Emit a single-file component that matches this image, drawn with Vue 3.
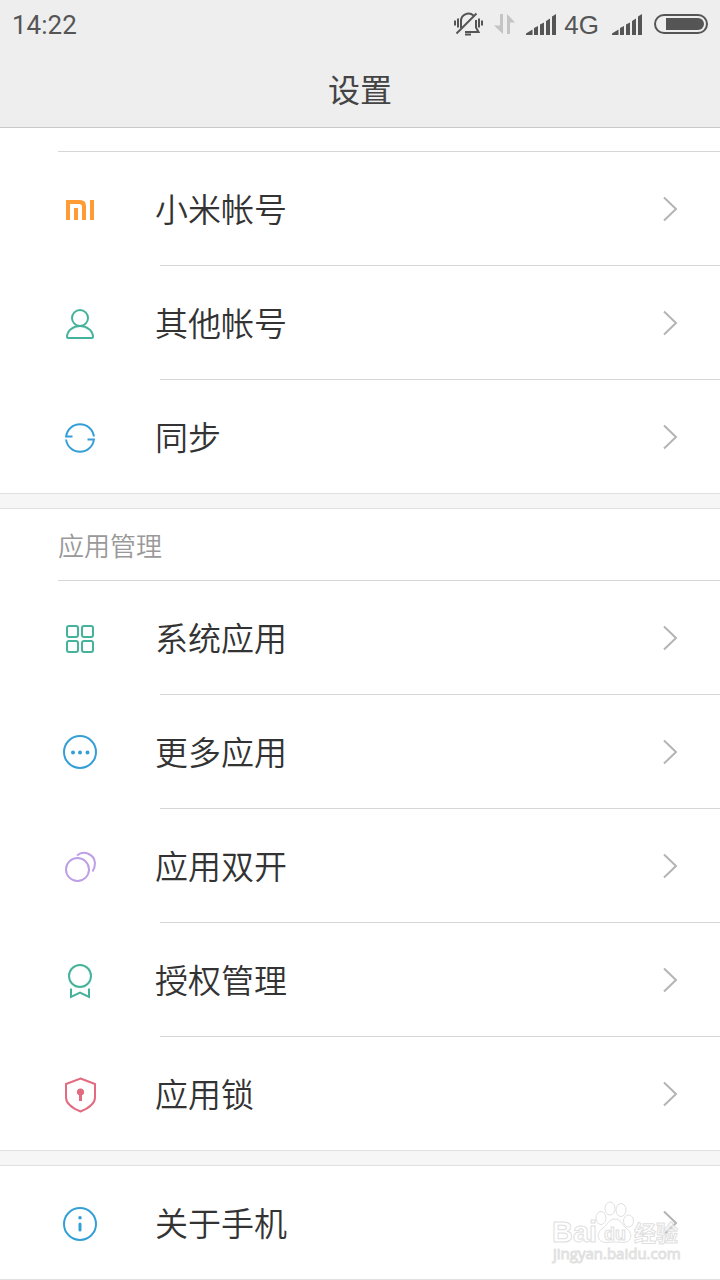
<template>
  <div class="settings">
    <header class="top">
      <div class="status-bar">
        <span class="time">14:22</span>
        <!-- 静音 -->
        <svg class="mute" width="30" height="24" viewBox="0 0 30 24" fill="none" stroke="#555" stroke-width="2">
          <path d="M1 8.500v5M4 6.500v9M7 8v5M22 8v5M25 6.500v9M28 8.500v5" />
          <path d="M7 16V9.500a7.500 7.500 0 0 1 12.500-6M22 8.500v7l2.500 4.500H11" />
          <path d="M2.500 21.500 22.500 1.500" />
          <path d="M11 22.500h6" />
        </svg>
        <!-- 数据传输 -->
        <svg class="transfer" width="22" height="20" viewBox="0 0 22 20" fill="#c4c4c4">
          <path d="M6 0h3v20L0 11.500h6zM13 0l8 8.500h-5V20h-3z" />
        </svg>
        <svg class="signal" width="30" height="21" viewBox="0 0 30 21" fill="#555">
          <path :d="signalPath" />
        </svg>
        <span class="network">4G</span>
        <svg class="signal second" width="30" height="21" viewBox="0 0 30 21" fill="#555">
          <path :d="signalPath" />
        </svg>
        <!-- 电量 -->
        <svg class="battery" width="54" height="20" viewBox="0 0 54 20">
          <rect x="1" y="1" width="52" height="18" rx="9" fill="none" stroke="#555" stroke-width="2" />
          <path d="M12 4h32a6 6 0 0 1 0 12H12z" fill="#555" />
        </svg>
      </div>
      <h1>设置</h1>
    </header>

    <main>
      <section v-for="group in groups" :key="group.id" class="group" :class="group.id">
        <h2 v-if="group.title">{{ group.title }}</h2>
        <ul>
          <li v-for="item in group.items" :key="item.name">
            <a class="row" href="#">
              <svg class="icon" width="44" height="44" viewBox="0 0 44 44" :style="{ color: item.color }">
                <path v-if="item.fill" :d="item.fill" fill="currentColor" />
                <path v-if="item.path" :d="item.path" fill="none" stroke="currentColor" stroke-width="2" />
              </svg>
              <span class="name">{{ item.name }}</span>
              <svg class="arrow" width="16" height="26" viewBox="0 0 16 26">
                <path d="M2 1.500 14 13 2 24.500" fill="none" stroke="#b4b4b4" stroke-width="2" />
              </svg>
            </a>
          </li>
        </ul>
      </section>

      <!-- 水印 -->
      <svg class="watermark" width="136" height="66" viewBox="0 0 136 66">
        <g class="paw">
          <ellipse cx="51" cy="18" rx="5" ry="6.500" />
          <ellipse cx="60" cy="8.500" rx="5" ry="6.500" />
          <ellipse cx="71" cy="10" rx="5" ry="6.500" />
          <ellipse cx="78.500" cy="21" rx="5" ry="6" />
          <path d="M65 19c-6 0-8 6-12 9s-6 7-4 11c3 5 9 3 16 3s12 2 15-3c2-4 0-8-4-11s-5-9-11-9z" />
        </g>
        <text class="mark-brand" x="2" y="42">Bai</text>
        <text class="mark-du" x="54" y="40">du</text>
        <text class="mark-cn" x="84" y="41">经验</text>
        <text class="mark-url" x="3" y="59">jingyan.baidu.com</text>
      </svg>
    </main>
  </div>
</template>

<script setup>
// 五格信号
const signalPath = 'M0 21v-1.500l6.500-4V21zM8 21v-7l4-2v9zM14 21v-10.500l4-2V21zM20 21V7l4-2.500V21zM26 21V2.500l4-2.500v21z'

const green = '#45b39c'
const blue = '#349fd6'

const groups = [
  {
    id: 'account',
    items: [
      {
        name: '小米帐号',
        color: '#ff9c35',
        fill: 'M8 13h14q6 0 6 6v14h-4V20q0-3-3-3h-9v16H8zM16 21h4v12h-4zM32 13h4v20h-4z'
      },
      {
        name: '其他帐号',
        color: green,
        path: 'M22 9a8 8 0 1 0 0 16a8 8 0 1 0 0-16M9 36A13 11 0 0 1 35 36q0 1-1 1H10q-1 0-1-1z'
      },
      {
        name: '同步',
        color: blue,
        path: 'M14.500 21.500H8.100A14 14 0 0 1 35.900 21.500M29.500 24.500H35.900A14 14 0 0 1 8.100 24.500'
      }
    ]
  },
  {
    id: 'apps',
    title: '应用管理',
    items: [
      {
        name: '系统应用',
        color: green,
        path: 'M11 10h7q2 0 2 2v7q0 2-2 2h-7q-2 0-2-2v-7q0-2 2-2zM26 10h7q2 0 2 2v7q0 2-2 2h-7q-2 0-2-2v-7q0-2 2-2zM11 25h7q2 0 2 2v7q0 2-2 2h-7q-2 0-2-2v-7q0-2 2-2zM26 25h7q2 0 2 2v7q0 2-2 2h-7q-2 0-2-2v-7q0-2 2-2z'
      },
      {
        name: '更多应用',
        color: blue,
        path: 'M22 6a16 16 0 1 0 0 32a16 16 0 1 0 0-32z',
        fill: 'M15 20.500a2 2 0 1 0 0 4a2 2 0 1 0 0-4zM22 20.500a2 2 0 1 0 0 4a2 2 0 1 0 0-4zM29.500 20.500a2 2 0 1 0 0 4a2 2 0 1 0 0-4z'
      },
      {
        name: '应用双开',
        color: '#bd9fe8',
        path: 'M19.500 14a11.500 11.500 0 1 0 0 23a11.500 11.500 0 1 0 0-23zM19 11.500A11 11 0 0 1 37 19Q37 24 34.500 27.500'
      },
      {
        name: '授权管理',
        color: green,
        path: 'M22 7a11 11 0 1 0 0 22a11 11 0 1 0 0-22zM13 30.500v8.500l9-4.500 9 4.500v-8.500'
      },
      {
        name: '应用锁',
        color: '#e26b80',
        path: 'M22.500 6.500L37 12V25.500q0 8-14.500 14Q8 33.500 8 25.500V12z',
        fill: 'M22.500 16.500a3.500 3.500 0 0 1 1.500 6.700V29h-3v-5.800a3.500 3.500 0 0 1 1.500-6.700z'
      }
    ]
  },
  {
    id: 'about',
    items: [
      {
        name: '关于手机',
        color: blue,
        path: 'M22 7a16 16 0 1 0 0 32a16 16 0 1 0 0-32z',
        fill: 'M22 15a1.800 1.800 0 1 0 0 3.600a1.800 1.800 0 1 0 0-3.600zM22 21.500q1.500 0 1.500 1.500v6q0 1.500-1.500 1.500t-1.500-1.500v-6q0-1.500 1.500-1.500z'
      }
    ]
  }
]
</script>

<style>
body {
  margin: 0;
  background: #fff;
}
</style>

<style scoped>
.settings {
  font-family: Roboto, "Noto Sans CJK SC", sans-serif;
  color: #333;
}

.top {
  background: #eee;
  border-bottom: 1px solid #c8c8c8;
}

.status-bar {
  display: flex;
  align-items: center;
  height: 50px;
  padding: 0 12px;
  color: #555;
  font-size: 26px;
}

.time {
  flex: 1;
}

.mute {
  margin-right: 10px;
  margin-bottom: 2px;
}

.transfer {
  margin-right: 10px;
  margin-bottom: 2px;
}

.signal {
  margin-bottom: 2px;
}

.network {
  margin: 0 13px 0 8px;
  font-family: "Liberation Sans", sans-serif;
}

.second {
  margin-right: 12px;
}

.battery {
  margin-bottom: 2px;
}

h1 {
  margin: 0;
  height: 77px;
  line-height: 82px;
  text-align: center;
  font-size: 32px;
  font-weight: 400;
  color: #444;
}

main {
  position: relative;
}

.group {
  border-bottom: 1px solid #e0e0e0;
}

.group + .group {
  margin-top: 14px;
  border-top: 1px solid #e0e0e0;
  box-shadow: 0 -14px #f6f6f6;
}

.account::before {
  content: '';
  display: block;
  height: 23px;
  margin-left: 58px;
  border-bottom: 1px solid #d6d6d6;
}

h2 {
  margin: 0 0 0 58px;
  height: 71px;
  line-height: 76px;
  border-bottom: 1px solid #d6d6d6;
  font-size: 26px;
  font-weight: 350;
  color: #999;
}

ul {
  margin: 0;
  padding: 0;
  list-style: none;
}

li + li::before {
  content: '';
  display: block;
  height: 1px;
  margin-left: 160px;
  background: #d6d6d6;
}

.row {
  display: flex;
  align-items: center;
  height: 113px;
  padding: 0 42px 0 58px;
  color: inherit;
  text-decoration: none;
}

.name {
  flex: 1;
  margin: 0 0 2px 53px;
  font-size: 33px;
  font-weight: 350;
}

.watermark {
  position: absolute;
  right: 34px;
  bottom: 14px;
}

.watermark text,
.paw {
  fill: #fff;
  fill-opacity: 0.7;
  stroke: #e0e0e0;
  stroke-width: 1px;
}

.mark-brand,
.mark-du {
  font-family: "Liberation Sans", sans-serif;
  font-weight: 700;
}

.mark-brand {
  font-size: 29px;
}

.mark-du {
  font-size: 18px;
}

.mark-cn {
  font-family: "Noto Sans CJK SC", sans-serif;
  font-size: 22px;
  font-weight: 700;
}

.mark-url {
  font-family: "Open Sans", sans-serif;
  font-size: 15px;
}
</style>
